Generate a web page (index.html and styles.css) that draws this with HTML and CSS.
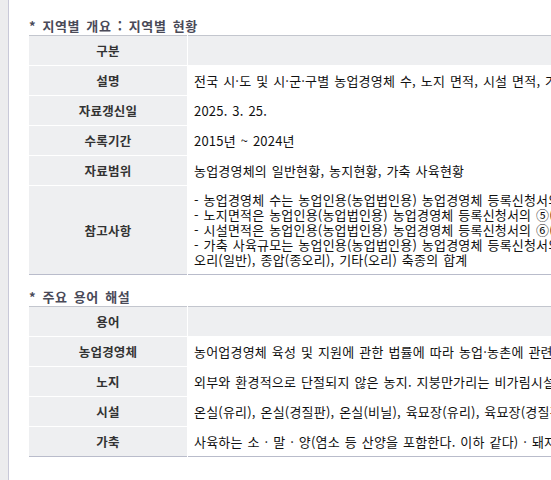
FILE: index.html
```html
<!DOCTYPE html>
<html lang="ko">
<head>
<meta charset="utf-8">
<link rel="stylesheet" href="styles.css">
</head>
<body>
<div class="page">
  <div class="side"></div>
  <div class="content">
    <h3 class="title">* 지역별 개요 : 지역별 현황</h3>
    <table class="info">
      <thead>
        <tr><th class="lab">구분</th><th class="val-h">내용</th></tr>
      </thead>
      <tbody>
        <tr><th class="lab">설명</th><td>전국 시·도 및 시·군·구별 농업경영체 수, 노지 면적, 시설 면적, 가축 사육규모 현황</td></tr>
        <tr><th class="lab">자료갱신일</th><td>2025. 3. 25.</td></tr>
        <tr><th class="lab">수록기간</th><td>2015년 ~ 2024년</td></tr>
        <tr><th class="lab">자료범위</th><td>농업경영체의 일반현황, 농지현황, 가축 사육현황</td></tr>
        <tr class="multi"><th class="lab">참고사항</th><td>- 농업경영체 수는 농업인용(농업법인용) 농업경영체 등록신청서의 농업경영주 정보를 기준으로 집계<br>- 노지면적은 농업인용(농업법인용) 농업경영체 등록신청서의 ⑤(이용형태)가 노지인 필지의 면적 합계<br>- 시설면적은 농업인용(농업법인용) 농업경영체 등록신청서의 ⑥(이용형태)가 시설인 필지의 면적 합계<br>- 가축 사육규모는 농업인용(농업법인용) 농업경영체 등록신청서의 가축 사육 정보 중 닭, 오리 등<br>오리(일반), 종압(종오리), 기타(오리) 축종의 합계</td></tr>
      </tbody>
    </table>

    <h3 class="title second">* 주요 용어 해설</h3>
    <table class="info">
      <thead>
        <tr><th class="lab">용어</th><th class="val-h">해설</th></tr>
      </thead>
      <tbody>
        <tr><th class="lab">농업경영체</th><td>농어업경영체 육성 및 지원에 관한 법률에 따라 농업·농촌에 관련된 융복합 산업을 경영하는 농업인과 농업법인</td></tr>
        <tr><th class="lab">노지</th><td>외부와 환경적으로 단절되지 않은 농지. 지붕만가리는 비가림시설(간이시설)은 노지로 분류</td></tr>
        <tr><th class="lab">시설</th><td>온실(유리), 온실(경질판), 온실(비닐), 육묘장(유리), 육묘장(경질판), 육묘장(비닐), 버섯재배사</td></tr>
        <tr><th class="lab">가축</th><td>사육하는 소 · 말 · 양(염소 등 산양을 포함한다. 이하 같다) · 돼지 · 닭 · 오리 등</td></tr>
      </tbody>
    </table>
  </div>
</div>
</body>
</html>
```

FILE: styles.css
```css
html, body {
  margin: 0;
  padding: 0;
  background: #ffffff;
  overflow: hidden;
}
body {
  font-family: "Noto Sans CJK KR", "Noto Sans", sans-serif;
  font-size: 13px;
  color: #222222;
}
.page {
  display: flex;
  min-height: 480px;
}
.side {
  width: 8px;
  flex: 0 0 8px;
  background: #ececee;
  border-right: 1px solid #c8c8d8;
}
.content {
  padding: 0 0 0 20px;
  flex: 0 0 auto;
}
.title {
  margin: 0;
  padding-top: 17px;
  height: 18px;
  font-size: 13px;
  font-weight: bold;
  color: #4a4a58;
  line-height: 18px;
  letter-spacing: 0.6px;
  word-spacing: 2px;
}
.title.second {
  padding-top: 13px;
}
.info {
  border-collapse: collapse;
  width: 1400px;
  border-top: 1px solid #c3c6ce;
  border-bottom: 1px solid #b9bccb;
  table-layout: fixed;
}
.info th, .info td {
  height: 29px;
  padding: 0;
  border-bottom: 1px solid #ffffff;
  white-space: nowrap;
  line-height: 15px;
}
.info tbody tr:last-child th,
.info tbody tr:last-child td {
  border-bottom: 0;
}
.info .lab {
  width: 158px;
  background: #eeeff1;
  font-size: 12.5px;
  font-weight: bold;
  color: #333333;
  text-align: center;
  letter-spacing: 0.2px;
  border-right: 1px solid #ffffff;
}
.info .val-h {
  background: #eeeff1;
  font-weight: bold;
  color: #333333;
  text-align: center;
}
.info td {
  padding-left: 6px;
  text-align: left;
  color: #111111;
  letter-spacing: 0.2px;
  word-spacing: 1px;
}
.info tr.multi td {
  padding-top: 6px;
  padding-bottom: 7px;
  height: auto;
}
```
